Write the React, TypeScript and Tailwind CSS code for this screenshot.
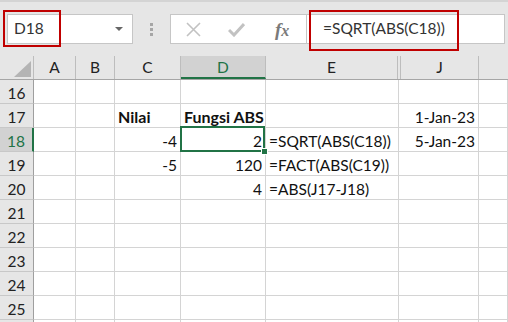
import React from "react";

const cols = [42, 39, 66, 85, 133, 80, 29];

type Cell = { t: string; align?: "l" | "r"; bold?: boolean };
const data: Record<number, Record<number, Cell>> = {
  17: { 2: { t: "Nilai", bold: true }, 3: { t: "Fungsi ABS", bold: true }, 5: { t: "1-Jan-23", align: "r" } },
  18: { 2: { t: "-4", align: "r" }, 3: { t: "2", align: "r" }, 4: { t: "=SQRT(ABS(C18))" }, 5: { t: "5-Jan-23", align: "r" } },
  19: { 2: { t: "-5", align: "r" }, 3: { t: "120", align: "r" }, 4: { t: "=FACT(ABS(C19))" } },
  20: { 3: { t: "4", align: "r" }, 4: { t: "=ABS(J17-J18)" } },
};

const rows = [16, 17, 18, 19, 20, 21, 22, 23, 24, 25, 26];

export default function App() {
  return (
    <div
      className="relative w-[508px] h-[322px] overflow-hidden bg-white text-[#222]"
      style={{ fontFamily: "Lato, 'Liberation Sans', sans-serif" }}
    >
      {/* Toolbar */}
      <div className="h-[56px] bg-[#e6e6e6] border-t-2 border-[#d4d4d4] flex items-start pt-[12px] pl-[7px]">
        <div className="w-[126px] h-[30px] bg-white border border-[#c6c6c6] flex items-center justify-between pl-[6px] pr-[9px]">
          <span className="text-[15.5px] text-[#333]">D18</span>
          <span className="w-0 h-0 border-l-[4px] border-r-[4px] border-t-[4px] border-l-transparent border-r-transparent border-t-[#666]" />
        </div>
        <div className="w-[37px] h-[30px] flex flex-col items-center justify-center gap-[2px]">
          <span className="w-[3px] h-[3px] bg-[#a6a6a6]" />
          <span className="w-[3px] h-[3px] bg-[#a6a6a6]" />
          <span className="w-[3px] h-[3px] bg-[#a6a6a6]" />
        </div>
        <div className="w-[137px] h-[30px] bg-white border border-[#c6c6c6] flex items-center">
          <div className="w-[44px] flex justify-center pl-[2px]">
            <svg width="15" height="15" viewBox="0 0 15 15">
              <path d="M1 1 L14 14 M14 1 L1 14" stroke="#c2c2c2" strokeWidth="1.6" fill="none" />
            </svg>
          </div>
          <div className="w-[44px] flex justify-center">
            <svg width="17" height="15" viewBox="0 0 17 15">
              <path d="M1 8 L6 13 L16 2" stroke="#c2c2c2" strokeWidth="3" fill="none" />
            </svg>
          </div>
          <div className="w-[48px] flex justify-center">
            <span
              className="italic font-bold text-[19px] text-[#7a7a7a] leading-none"
              style={{ fontFamily: "'Liberation Serif', 'DejaVu Serif', serif" }}
            >
              f<span className="text-[16px]">x</span>
            </span>
          </div>
        </div>
        <div className="w-[198px] h-[30px] bg-white border border-[#c6c6c6] border-l-0 flex items-center pl-[16px]">
          <span className="text-[15.5px] text-[#333]">=SQRT(ABS(C18))</span>
        </div>
      </div>

      {/* Column headers */}
      <div className="flex h-[24px] bg-[#e6e6e6] border-b border-[#a6a6a6]">
        <div className="w-[34px] h-full border-r border-[#bdbdbd] relative">
          <svg className="absolute left-[14px] top-[5px]" width="17" height="16" viewBox="0 0 17 16">
            <polygon points="17,0 17,16 0,16" fill="#b4b4b4" />
          </svg>
        </div>
        {["A", "B", "C"].map((l, i) => (
          <div
            key={l}
            style={{ width: cols[i] }}
            className="h-full border-r border-[#bdbdbd] flex items-center justify-center text-[15.5px] text-[#222]"
          >
            {l}
          </div>
        ))}
        <div className="w-[85px] h-full bg-[#d2d2d2] border-r border-[#bdbdbd] border-b-2 border-b-[#217346] flex items-center justify-center text-[15.5px] text-[#217346] pt-[2px]">
          D
        </div>
        <div className="w-[132px] h-full border-r border-[#bdbdbd] flex items-center justify-center text-[15.5px] text-[#222]">
          E
        </div>
        <div className="w-[2px] h-full" />
        <div className="w-[79px] h-full border-l border-r border-[#bdbdbd] flex items-center justify-center text-[15.5px] text-[#222]">
          J
        </div>
        <div className="w-[29px] h-full" />
      </div>

      {/* Rows */}
      {rows.map((r) => (
        <div key={r} className="flex h-[24px]">
          <div
            className={
              r === 18
                ? "w-[34px] h-full bg-[#d2d2d2] border-b border-[#c8c8c8] border-r-2 border-r-[#217346] flex items-end justify-center text-[15.5px] leading-[20px] text-[#217346]"
                : "w-[34px] h-full bg-[#e6e6e6] border-b border-[#c8c8c8] border-r border-r-[#9f9f9f] flex items-end justify-center text-[15.5px] leading-[20px] text-[#222]"
            }
          >
            {r === 26 ? "" : r}
          </div>
          {cols.map((w, ci) => {
            const c = data[r]?.[ci];
            return (
              <div
                key={ci}
                style={{ width: w }}
                className={
                  "h-full border-b border-r border-[#d4d4d4] flex items-end px-[3px] text-[15.5px] leading-[20px] whitespace-nowrap relative " +
                  (c?.align === "r" ? "justify-end" : "justify-start")
                }
              >
                {c && (
                  <span className={c.bold ? "font-bold text-[16px] text-[#111]" : "text-[#111]"}>{c.t}</span>
                )}
              </div>
            );
          })}
        </div>
      ))}

      {/* Selection */}
      <div className="absolute left-[180px] top-[126px] w-[85px] h-[26px] border-2 border-[#217346] pointer-events-none" />
      <div className="absolute left-[261px] top-[148px] w-[7px] h-[7px] bg-[#217346] border border-white" />

      {/* Red highlights */}
      <div className="absolute left-[3px] top-[10px] w-[58px] h-[37px] border-2 border-[#c00000]" />
      <div className="absolute left-[309px] top-[10px] w-[150px] h-[41px] border-2 border-[#c00000]" />
    </div>
  );
}
